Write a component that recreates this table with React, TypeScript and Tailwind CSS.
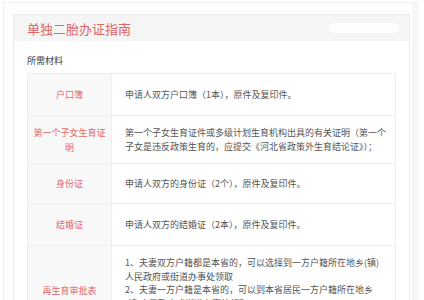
import React from 'react';

const font = { fontFamily: '"Noto Sans CJK SC", "Noto Sans", sans-serif' };

interface Row {
  label: string;
  lines: string[];
  h: string;
  top?: boolean;
}

const rows: Row[] = [
  { label: '户口簿', lines: ['申请人双方户口簿（1本），原件及复印件。'], h: 'h-[41px]' },
  {
    label: '第一个子女生育证明',
    lines: [
      '第一个子女生育证件或多级计划生育机构出具的有关证明（第一个',
      '子女是违反政策生育的，应提交《河北省政策外生育结论证》）；',
    ],
    h: 'h-[48px]',
  },
  { label: '身份证', lines: ['申请人双方的身份证（2个），原件及复印件。'], h: 'h-[40px]' },
  { label: '结婚证', lines: ['申请人双方的结婚证（2本），原件及复印件。'], h: 'h-[42px]' },
  {
    label: '再生育审批表',
    lines: [
      '1、夫妻双方户籍都是本省的，可以选择到一方户籍所在地乡(镇)',
      '人民政府或街道办事处领取',
      '2、夫妻一方户籍是本省的，可以到本省居民一方户籍所在地乡',
      '(镇)人民政府或街道办事处领取',
      '3、夫妻双方户籍都不在本省的，到现居住地乡(镇)人民政府领取',
    ],
    h: 'h-[90px]',
    top: true,
  },
];

export default function App() {
  return (
    <div className="w-[424px] h-[300px] overflow-hidden bg-white pt-[2px] pl-[3px]" style={font}>
      <div className="w-[411px] h-[320px] border border-[#f0f0f0] pt-[11px] pl-[9px] shadow-[5px_0_0_#f7f7f7]">
        <div className="w-[397px] border border-[#ececec] bg-white">
          <div className="h-[26px] bg-[#f5f5f5] pl-[13px] flex items-center justify-between pr-[10px]">
            <span className="text-[13px] leading-none text-[#de6666]">单独二胎办证指南</span>
            <span className="w-[70px] h-[10px] rounded-sm bg-white/80" />
          </div>
          <div className="px-[13px] pt-[14px]">
            <div className="text-[9px] leading-[12px] text-[#444] mb-[6px]">所需材料</div>
            <div className="border border-[#ededed]">
              {rows.map((r, i) => (
                <div key={i} className={`flex ${r.h} ${i > 0 ? 'border-t border-[#eeeeee]' : ''}`}>
                  <div className="w-[84px] shrink-0 bg-[#f8f8f8] border-r border-[#ededed] flex items-center justify-center px-[5px] text-center text-[9px] leading-[15px] text-[#e36a6a]">
                    {r.label}
                  </div>
                  <div
                    className={`flex-1 pl-[13px] text-[9px] leading-[13.5px] text-[#555] whitespace-nowrap flex flex-col ${
                      r.top ? 'justify-start pt-[10px]' : 'justify-center'
                    }`}
                  >
                    {r.lines.map((l, j) => (
                      <div key={j}>{l}</div>
                    ))}
                  </div>
                </div>
              ))}
            </div>
          </div>
        </div>
      </div>
    </div>
  );
}
